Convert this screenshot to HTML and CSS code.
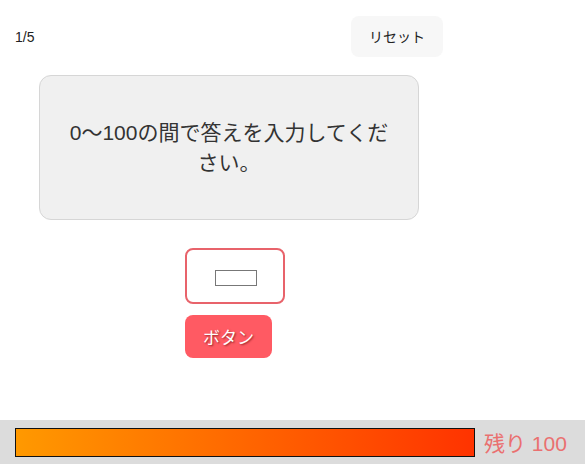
FILE: index.html
```html
<!DOCTYPE html>
<html lang="ja">
<head>
    <meta charset="UTF-8">
    <title>Quiz</title>
    <link rel="stylesheet" href="styles.css">
</head>
<body>

<div class="main">
    <div class="top">
        <span class="count">1/5</span>
        <button class="reset">リセット</button>
    </div>

    <div class="question">0〜100の間で答えを入力してください。</div>

    <div class="answer">
        <input type="text" class="answer-input">
    </div>
    <button class="submit">ボタン</button>
</div>

<footer class="timer">
    <div class="bar"><div class="bar-fill"></div></div>
    <span class="left">残り 100</span>
</footer>

</body>
</html>
```

FILE: styles.css
```css
body {
    font-family: "Liberation Sans", "Noto Sans CJK JP", sans-serif;
    margin: 0;
    padding: 0;
    height: 100vh;
    display: flex;
    flex-direction: column;
    color: #222;
}
.main {
    flex: 1;
}
.top {
    width: 428px;
    padding: 16px 0 0 15px;
    display: flex;
    align-items: center;
    justify-content: space-between;
}
.count {
    font-size: 14px;
}
.reset {
    font-family: inherit;
    font-size: 14px;
    color: #222;
    background: #f7f7f7;
    border: none;
    border-radius: 8px;
    width: 92px;
    height: 41px;
    padding: 0 0 2px;
}
.question {
    margin: 18px 0 0 39px;
    width: 338px;
    padding: 42px 20px 41px;
    background-color: #f0f0f0;
    border: 1px solid #d6d6d6;
    border-radius: 12px;
    font-size: 21px;
    line-height: 30px;
    color: #333;
    text-align: center;
}
.answer {
    margin: 28px 0 0 185px;
    width: 96px;
    height: 52px;
    border: 2px solid #e8636b;
    border-radius: 8px;
    display: flex;
    align-items: center;
    justify-content: center;
}
.answer-input {
    width: 40px;
    height: 14px;
    padding: 0;
    border: 1px solid #777;
    margin: 3px 0 0 2px;
}
.submit {
    display: block;
    margin: 11px 0 0 185px;
    width: 87px;
    height: 43px;
    background-color: #ff5a63;
    border: none;
    border-radius: 8px;
    color: white;
    font-family: inherit;
    font-size: 17px;
    text-shadow: 1px 1px 2px rgba(80, 0, 0, 0.6);
}
.timer {
    background: #dcdcdc;
    height: 44px;
    display: flex;
    align-items: center;
    padding: 0 0 0 15px;
    gap: 9px;
}
.bar {
    flex-shrink: 0;
    width: 458px;
    height: 27px;
    border: 1px solid #111;
    margin-top: 1px;
}
.bar-fill {
    height: 100%;
    background: linear-gradient(to right, #ff9900, #ff3300);
}
.left {
    white-space: nowrap;
    font-size: 21px;
    color: #ea7070;
}
```
